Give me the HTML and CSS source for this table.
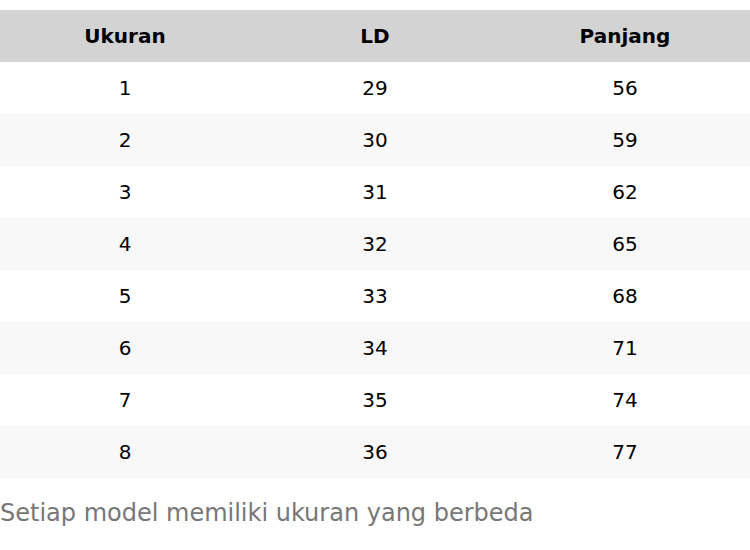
FILE: index.html
```html
<!DOCTYPE html>
<html>
<head>
<meta charset="utf-8">
<link rel="stylesheet" href="styles.css">
</head>
<body>
<div class="page">
<table class="size-table">
<thead>
<tr><th>Ukuran</th><th>LD</th><th>Panjang</th></tr>
</thead>
<tbody>
<tr><td>1</td><td>29</td><td>56</td></tr>
<tr><td>2</td><td>30</td><td>59</td></tr>
<tr><td>3</td><td>31</td><td>62</td></tr>
<tr><td>4</td><td>32</td><td>65</td></tr>
<tr><td>5</td><td>33</td><td>68</td></tr>
<tr><td>6</td><td>34</td><td>71</td></tr>
<tr><td>7</td><td>35</td><td>74</td></tr>
<tr><td>8</td><td>36</td><td>77</td></tr>
</tbody>
</table>
<p class="note">Setiap model memiliki ukuran yang berbeda</p>
</div>
</body>
</html>
```

FILE: styles.css
```css
html, body {
  margin: 0;
  padding: 0;
  background: #ffffff;
}
.page {
  padding-top: 10px;
  font-family: "DejaVu Sans", sans-serif;
}
.size-table {
  width: 100%;
  border-collapse: collapse;
  table-layout: fixed;
  font-size: 20px;
  color: #000;
}
.size-table th,
.size-table td {
  height: 52px;
  padding: 0;
  text-align: center;
  vertical-align: middle;
}
.size-table th {
  background: #d3d3d3;
  font-weight: bold;
}
.size-table tbody tr:nth-child(even) {
  background: #f8f8f8;
}
.note {
  margin: 21px 0 0 0;
  font-size: 24px;
  color: #777777;
}
```
